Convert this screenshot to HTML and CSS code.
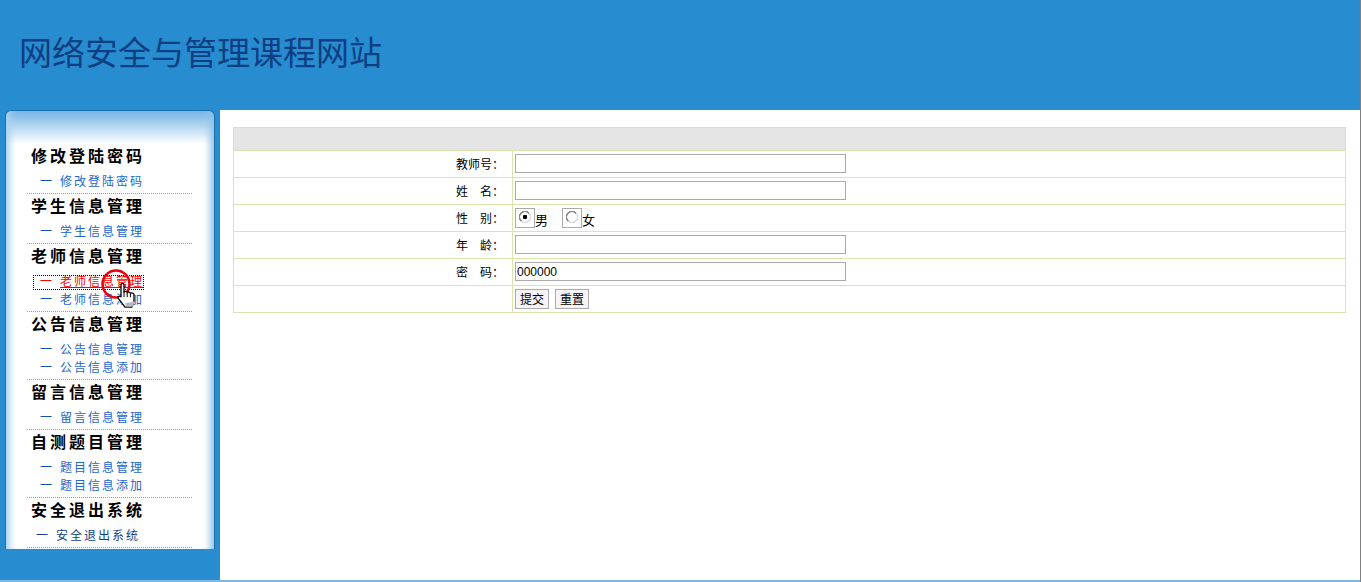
FILE: index.html
```html
<!DOCTYPE html>
<html lang="zh-CN">
<head>
<meta charset="utf-8">
<title>网络安全与管理课程网站</title>
<link rel="stylesheet" href="styles.css">
</head>
<body>
<header class="top"><h1 class="site-title">网络安全与管理课程网站</h1></header>
<div class="main">
  <aside class="side">
    <nav class="card">
      <section class="group"><h2 class="group-title">修改登陆密码</h2>
        <a class="link"><span class="dash">一</span>修改登陆密码</a></section>
      <section class="group"><h2 class="group-title">学生信息管理</h2>
        <a class="link"><span class="dash">一</span>学生信息管理</a></section>
      <section class="group"><h2 class="group-title">老师信息管理</h2>
        <a class="link active"><span class="dash">一</span>老师信息管理
          <svg class="pointer" width="36" height="40" viewBox="0 0 36 40">
            <circle cx="15" cy="15" r="13.5" fill="none" stroke="#e8000c" stroke-width="2.5"/>
            <path d="M20 16c0-2.200 3-2.200 3 0v7c.8-1 3-1 3.200.6.8-1 3-.8 3.200.8.8-.8 3.400-.6 3.600 1.200v6.500l-2 6H24l-6.500-8.500c-1.200-2 1-3.200 2.500-1.800z" fill="#fff" stroke="#000" stroke-width="1.300" stroke-linejoin="round"/>
            <path d="M24.500 37.500h7.500l1.500-5-9 1.500z" fill="#bbb"/>
            <path d="M23 23v5M26.200 24v4M29.400 24.800v3.500" fill="none" stroke="#000" stroke-width="1"/>
          </svg></a>
        <a class="link"><span class="dash">一</span>老师信息添加</a></section>
      <section class="group"><h2 class="group-title">公告信息管理</h2>
        <a class="link"><span class="dash">一</span>公告信息管理</a>
        <a class="link"><span class="dash">一</span>公告信息添加</a></section>
      <section class="group"><h2 class="group-title">留言信息管理</h2>
        <a class="link"><span class="dash">一</span>留言信息管理</a></section>
      <section class="group"><h2 class="group-title">自测题目管理</h2>
        <a class="link"><span class="dash">一</span>题目信息管理</a>
        <a class="link"><span class="dash">一</span>题目信息添加</a></section>
      <section class="group"><h2 class="group-title">安全退出系统</h2>
        <a class="link exit"><span class="dash">一</span>安全退出系统</a></section>
    </nav>
  </aside>
  <main class="content">
    <form>
      <table class="form-table">
        <colgroup><col class="col-label"><col></colgroup>
        <tr class="head"><td colspan="2"></td></tr>
        <tr><td class="label">教师号：</td><td class="field"><input class="text" type="text"></td></tr>
        <tr><td class="label">姓　名：</td><td class="field"><input class="text" type="text"></td></tr>
        <tr><td class="label">性　别：</td><td class="field"><label class="choice"><input class="radio" type="radio" name="sex" checked>男</label><label class="choice"><input class="radio" type="radio" name="sex">女</label></td></tr>
        <tr><td class="label">年　龄：</td><td class="field"><input class="text" type="text"></td></tr>
        <tr><td class="label">密　码：</td><td class="field"><input class="text" type="text" value="000000"></td></tr>
        <tr><td class="label"></td><td class="field"><button class="btn" type="button">提交</button><button class="btn" type="reset">重置</button></td></tr>
      </table>
    </form>
  </main>
</div>
<div class="foot"></div>
</body>
</html>
```
FILE: styles.css
```css
* { box-sizing: border-box; }
html, body { margin: 0; height: 582px; overflow: hidden; }
body { background: #fff; border-right: 1px solid #808080; font-family: "Liberation Sans", "Noto Sans CJK SC", sans-serif; font-size: 12px; color: #000; }
.top { height: 110px; background: #288cd0; padding: 31px 0 0 19px; }
.site-title { margin: 0; font: 400 33px/40px "Noto Sans CJK SC", sans-serif; color: #0d3f82; }
.main { display: flex; height: 470px; }
.side { width: 220px; background: #288cd0; padding: 0 5px; flex: none; }
.card { width: 210px; height: 439px; padding: 33px 22px 0 21px; overflow: hidden; border: 1px solid #1a70ad; border-bottom: 0; border-radius: 6px 6px 0 0;
  background: linear-gradient(#74b4e6 0, #fff 33px);
  box-shadow: inset 9px 0 7px -5px #a9d2ef, inset -9px 0 7px -5px #8fc3e8; }
.group { border-bottom: 1px dotted #7ba6b4; padding-bottom: 3px; }
.group-title { margin: 0; height: 28px; padding-left: 4px; font: 700 16px/26px "Liberation Serif", "Noto Sans CJK SC", serif; letter-spacing: 3px; color: #000; white-space: nowrap; }
.link { display: block; position: relative; height: 18px; padding-left: 13px; font: 400 12px/20px "Liberation Sans", "Noto Sans CJK SC", sans-serif; letter-spacing: 2px; color: #1c66cc; white-space: nowrap; }
.dash { display: inline-block; width: 20px; letter-spacing: 0; color: #0f56b4; }
.active { color: #f00; margin: 3px 0 0 6px; padding-left: 7px; width: 111px; height: 15px; line-height: 15px; outline: 1px dotted #000; outline-offset: -1px; text-decoration: underline; }
.active .dash { color: #f00; }
.exit { padding-left: 9px; color: #123f85; }
.exit .dash { color: #123f85; }
.pointer { position: absolute; left: 68px; top: -6px; z-index: 1; }
.content { flex: 1; background: #fff; padding: 17px 0 0 13px; }
.form-table { width: 1113px; border-collapse: collapse; table-layout: fixed; }
.form-table td { border: 1px solid #dde3ad; height: 27px; padding: 0; vertical-align: middle; }
.form-table .head td { height: 23px; background: #e5e5e5; }
.col-label { width: 279px; }
.form-table .label { text-align: right; padding: 0 8px 2px 0; }
.form-table .field { padding-left: 2px; }
.text { display: block; width: 331px; height: 19px; border: 1px solid #aaa; padding: 0 1px; margin: 0 0 1px; font: 12px/17px "Liberation Sans", sans-serif; color: #000; background: #fff; outline: 0; }
.choice { display: inline-flex; align-items: flex-end; margin-right: 14px; font-size: 13px; line-height: 14px; vertical-align: middle; }
.radio { appearance: none; width: 20px; height: 20px; margin: 0; border: 1px solid #aaa; flex: none;
  background:
    radial-gradient(circle at 9px 8px, #fff 0 4.500px, transparent 5px 6px, #fff 6.500px),
    conic-gradient(from 45deg at 9px 8px, #ddd 0 180deg, #888 180deg 360deg); }
.radio:checked { background:
    radial-gradient(circle at 9px 8px, #000 0 2px, #fff 2.500px 4.500px, transparent 5px 6px, #fff 6.500px),
    conic-gradient(from 45deg at 9px 8px, #ddd 0 180deg, #888 180deg 360deg); }
.btn { width: 34px; height: 20px; margin: 0 6px 0 0; padding: 0; border: 1px solid #aaa; background: #f6f2f6; font: 12px/18px "Noto Sans CJK SC", sans-serif; color: #000; vertical-align: middle; }
.foot { height: 2px; background: #7fb8e4; }
```
